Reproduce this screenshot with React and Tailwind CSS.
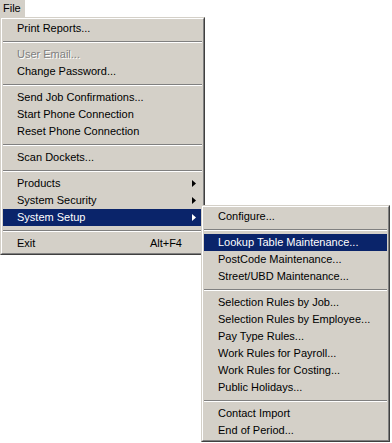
import React from 'react';

const mainItems = [
  { label: 'Print Reports...' },
  { sep: true },
  { label: 'User Email...', disabled: true },
  { label: 'Change Password...' },
  { sep: true },
  { label: 'Send Job Confirmations...' },
  { label: 'Start Phone Connection' },
  { label: 'Reset Phone Connection' },
  { sep: true },
  { label: 'Scan Dockets...' },
  { sep: true },
  { label: 'Products', sub: true },
  { label: 'System Security', sub: true },
  { label: 'System Setup', sub: true, active: true },
  { sep: true },
  { label: 'Exit', shortcut: 'Alt+F4' },
];

const setupItems = [
  { label: 'Configure...' },
  { sep: true },
  { label: 'Lookup Table Maintenance...', active: true },
  { label: 'PostCode Maintenance...' },
  { label: 'Street/UBD Maintenance...' },
  { sep: true },
  { label: 'Selection Rules by Job...' },
  { label: 'Selection Rules by Employee...' },
  { label: 'Pay Type Rules...' },
  { label: 'Work Rules for Payroll...' },
  { label: 'Work Rules for Costing...' },
  { label: 'Public Holidays...' },
  { sep: true },
  { label: 'Contact Import' },
  { label: 'End of Period...' },
];

// small right-pointing triangle used for submenus
const Arrow = ({ active }) => (
  <svg width="4" height="7" viewBox="0 0 4 7" className="shrink-0">
    <path d="M0 0 L4 3.5 L0 7 Z" fill={active ? '#ffffff' : '#000000'} />
  </svg>
);

const MenuRow = ({ item }) => {
  if (item.sep) {
    return (
      <div className="h-[9px] flex flex-col justify-center">
        <div className="h-px bg-[#808080]" />
        <div className="h-px bg-white" />
      </div>
    );
  }
  return (
    <div
      className={`h-[17px] flex items-center pl-[14px] pr-[6px] ${
        item.active ? 'bg-[#0a246a] text-white' : 'text-black'
      }`}
    >
      <span
        className={`flex-1 whitespace-nowrap ${
          item.disabled ? 'text-[#808080] [text-shadow:1px_1px_0_#ffffff]' : ''
        }`}
      >
        {item.label}
      </span>
      {item.shortcut && <span className="mr-[14px] whitespace-nowrap">{item.shortcut}</span>}
      {item.sub && <Arrow active={item.active} />}
    </div>
  );
};

const Menu = ({ items, className }) => (
  <div
    className={`bg-[#d4d0c8] border border-t-[#d4d0c8] border-l-[#d4d0c8] border-r-[#404040] border-b-[#404040] ${className}`}
  >
    <div className="border border-t-white border-l-white border-r-[#808080] border-b-[#808080] py-px px-px">
      {items.map((item, i) => (
        <MenuRow key={i} item={item} />
      ))}
    </div>
  </div>
);

export default function App() {
  return (
    <div
      className="relative w-[392px] h-[443px] bg-white overflow-hidden text-[11px] leading-none"
      style={{ fontFamily: '"Liberation Sans", Arial, sans-serif' }}
    >
      <div className="w-[25px] h-[17px] bg-[#d4d0c8] flex items-center pl-[3px]">File</div>
      <Menu items={mainItems} className="w-[205px]" />
      <Menu items={setupItems} className="absolute left-[201px] top-[205px] w-[189px]" />
    </div>
  );
}
